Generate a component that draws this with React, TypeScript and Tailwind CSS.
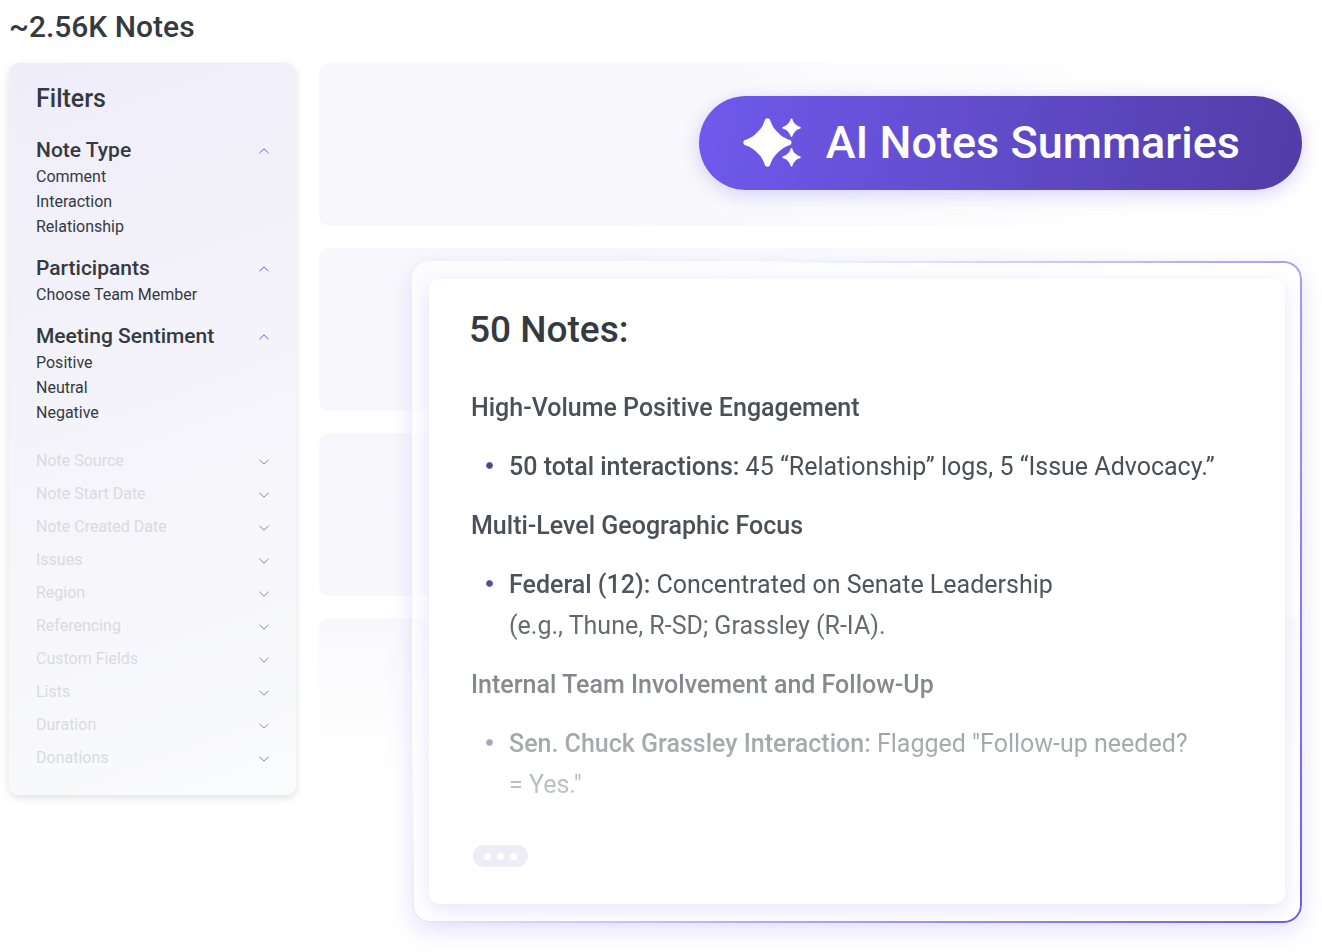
import React from 'react';

type Section = { title: string; options: string[] };

const openSections: Section[] = [
  { title: 'Note Type', options: ['Comment', 'Interaction', 'Relationship'] },
  { title: 'Participants', options: ['Choose Team Member'] },
  { title: 'Meeting Sentiment', options: ['Positive', 'Neutral', 'Negative'] },
];

const closedSections = [
  'Note Source',
  'Note Start Date',
  'Note Created Date',
  'Issues',
  'Region',
  'Referencing',
  'Custom Fields',
  'Lists',
  'Duration',
  'Donations',
];

function Chevron({ open = false }: { open?: boolean }) {
  return (
    <svg
      viewBox="0 0 10 8"
      className={open ? 'w-[10px] h-2 text-[#6f58e9]' : 'w-[10px] h-2 text-[#85898f]'}
      fill="none"
      stroke="currentColor"
      aria-hidden="true"
    >
      <path d={open ? 'M.5 7.2 5 2.800l4.500 4.400' : 'M.5 2.800 5 7.200 9.500 2.800'} />
    </svg>
  );
}

function Sparkles() {
  return (
    <svg viewBox="0 0 58 50" className="w-[58px] h-[50px] shrink-0" fill="#fff" aria-hidden="true">
      <path d="M22.200 1.300Q24.500-.7 26.800 1.300C29.300 8.300 31.200 11 34.800 14.200 38 17.800 40.700 19.700 47.500 22.300Q49.600 24.500 47.500 26.700C40.700 29.300 38 31.200 34.800 34.800 31.200 38 29.300 40.700 26.800 47.700Q24.500 49.700 22.200 47.700C19.700 40.700 17.800 38 14.200 34.800 11 31.200 8.300 29.300 1.300 26.700Q-.7 24.500 1.300 22.300C8.300 19.700 11 17.800 14.200 14.200 17.800 11 19.700 8.300 22.200 1.300Z" />
      <path
        id="small-star"
        d="M47.700.8Q48.500.1 49.300.8C50.200 3.800 51 4.800 52.200 6 53.400 7.200 54.400 8 57.400 8.900Q58.100 9.700 57.400 10.500C54.400 11.400 53.400 12.200 52.200 13.400 51 14.600 50.200 15.600 49.300 18.600Q48.500 19.300 47.700 18.600C46.800 15.600 46 14.600 44.800 13.400 43.600 12.200 42.600 11.400 39.600 10.500Q38.900 9.700 39.600 8.900C42.600 8 43.600 7.200 44.800 6 46 4.800 46.800 3.800 47.700.8Z"
      />
      <use href="#small-star" y="29.600" />
    </svg>
  );
}

function FilterPanel() {
  return (
    <aside className="w-[287px] shrink-0 rounded-[10px] bg-linear-[160deg] from-[#efedf9] via-[#f5f4fa] via-50% to-[#fafbfd] px-[27px] pt-5 pb-[21px] shadow-[0_3px_8px_rgba(0,0,0,0.12)]">
      <h2 className="mb-[21px] text-[25px] leading-8 font-medium text-[#343a40]">Filters</h2>

      <div className="flex flex-col gap-[15px]">
        {openSections.map((section) => (
          <section key={section.title}>
            <h3>
              <button
                type="button"
                aria-expanded="true"
                className="flex w-full items-center justify-between text-[21px] leading-7 font-medium text-[#343a40]"
              >
                {section.title}
                <Chevron open />
              </button>
            </h3>
            <ul className="text-base leading-[25px] text-[#343a40]">
              {section.options.map((option) => (
                <li key={option}>{option}</li>
              ))}
            </ul>
          </section>
        ))}
      </div>

      <div className="mt-[19px]">
        {closedSections.map((title) => (
          <button
            key={title}
            type="button"
            aria-expanded="false"
            className="flex w-full items-center justify-between text-base leading-[33px] text-[#dadbdd]"
          >
            {title}
            <Chevron />
          </button>
        ))}
      </div>
    </aside>
  );
}

function Bullet({ children }: { children: React.ReactNode }) {
  return (
    <li className="flex gap-4 pl-[15px]">
      <span className="mt-4 h-[7px] w-[7px] shrink-0 rounded-full border border-[#6350d8] bg-[#4b4f60]" />
      <p>{children}</p>
    </li>
  );
}

function SummaryCard() {
  return (
    <article className="relative ml-[93px] self-stretch rounded-[18px] bg-white/50 px-[17px] pt-[18px] pb-[19px] shadow-[0_8px_24px_rgba(111,88,233,0.18)]">
      {/* Gradient outline, masked so the middle stays see-through */}
      <div className="pointer-events-none absolute inset-0 rounded-[18px] bg-linear-[125deg] from-white/40 from-25% via-[#b0a4f6] via-62% to-[#6f58e9] p-[2px] [mask:linear-gradient(#fff_0_0)_content-box_exclude,linear-gradient(#fff_0_0)]" />

      <div className="rounded-[10px] bg-white px-10 pt-[29px] pb-[37px] shadow-[0_6px_20px_rgba(111,88,233,0.16)]">
        <h2 className="text-[37px] leading-[44px] font-medium text-[#343a40]">50 Notes:</h2>

        <div className="mt-[35px] ml-[2px] flex flex-col gap-[18px] text-[25px] leading-[41px] text-[#495057] [mask-image:linear-gradient(#000_45%,rgba(0,0,0,0.3)_100%)]">
          <h3 className="font-medium">High-Volume Positive Engagement</h3>
          <ul>
            <Bullet>
              <strong className="font-medium">50 total interactions:</strong> 45 “Relationship” logs, 5 “Issue
              Advocacy.”
            </Bullet>
          </ul>
          <h3 className="font-medium">Multi-Level Geographic Focus</h3>
          <ul>
            <Bullet>
              <strong className="font-medium">Federal (12):</strong> Concentrated on Senate Leadership
              <br />
              (e.g., Thune, R-SD; Grassley (R-IA).
            </Bullet>
          </ul>
          <h3 className="font-medium">Internal Team Involvement and Follow-Up</h3>
          <ul>
            <Bullet>
              <strong className="font-medium">Sen. Chuck Grassley Interaction:</strong> Flagged "Follow-up needed?
              <br />= Yes."
            </Bullet>
          </ul>
        </div>

        <button
          type="button"
          aria-label="Show more"
          className="mt-10 ml-1 flex h-[22px] w-[55px] items-center justify-center gap-[6px] rounded-full bg-[#eeecf7]"
        >
          <span className="h-[7px] w-[7px] rounded-full bg-white" />
          <span className="h-[7px] w-[7px] rounded-full bg-white" />
          <span className="h-[7px] w-[7px] rounded-full bg-white" />
        </button>
      </div>
    </article>
  );
}

export default function App() {
  return (
    <div className="overflow-hidden bg-white pt-[7px] pr-5 pb-[29px] pl-[9px] font-[Roboto,sans-serif]">
      <h1 className="mb-4 text-[30px] leading-10 font-medium text-[#343a40]">~2.56K Notes</h1>

      <div className="flex items-start gap-[23px]">
        <FilterPanel />

        {/* Note placeholders and the summary share one grid cell */}
        <main className="grid min-w-0 flex-1">
          <div className="col-start-1 row-start-1 flex flex-col gap-[22px]">
            <div className="h-[163px] rounded-[10px] bg-linear-to-r from-[#f8f8fc] from-30% to-white to-90%" />
            <div className="h-[163px] rounded-[10px] bg-linear-to-r from-[#f8f8fc] from-30% to-white to-90%" />
            <div className="h-[163px] rounded-[10px] bg-linear-to-r from-[#f8f8fc] from-30% to-white to-90%" />
            <div className="h-[163px] rounded-[10px] bg-linear-to-b from-[#f9f9fc] to-white" />
          </div>

          <div className="col-start-1 row-start-1 flex flex-col items-end gap-[71px] pt-[33px]">
            <button
              type="button"
              className="flex h-[94px] items-center gap-[25px] rounded-full bg-linear-[100deg] from-[#7059ec] to-[#503da6] pr-[62px] pl-11 text-[45px] font-medium whitespace-nowrap text-white shadow-[0_4px_20px_rgba(111,88,233,0.28)]"
            >
              <Sparkles />
              AI Notes Summaries
            </button>
            <SummaryCard />
          </div>
        </main>
      </div>
    </div>
  );
}
